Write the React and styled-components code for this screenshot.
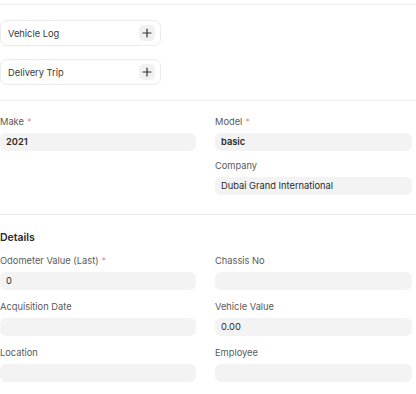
import React from "react";
import styled, { createGlobalStyle } from "styled-components";

const Global = createGlobalStyle`
  html, body { margin: 0; padding: 0; background: #fff; }
  body { font-family: Inter, "Noto Sans", sans-serif; color: #333; -webkit-font-smoothing: antialiased; }
  * { box-sizing: border-box; }
`;

const Page = styled.div`
  width: 416px;
  padding-top: 4px;
`;

const Section = styled.section`
  border-top: 1px solid #ededed;
  padding: ${(p) => p.$pad || "15px 4px 16px 0"};
`;

const Connections = styled.div`
  display: flex;
  flex-direction: column;
  gap: 13px;
  width: 161px;
`;

const ConnBox = styled.div`
  height: 26px;
  border: 1px solid #ebebeb;
  border-radius: 7px;
  display: flex;
  align-items: center;
  justify-content: space-between;
  padding: 0 5px 0 7px;
  font-size: 9.3px;
  color: #383838;
`;

const PlusBtn = styled.span`
  width: 16px;
  height: 16px;
  border-radius: 5px;
  background: #f1f1f1;
  display: flex;
  align-items: center;
  justify-content: center;
`;

const Grid = styled.div`
  display: grid;
  grid-template-columns: 196px 197px;
  column-gap: 19px;
  align-items: start;
`;

const Column = styled.div`
  display: flex;
  flex-direction: column;
  gap: ${(p) => p.$gap || "10px"};
`;

const Field = styled.div`
  display: flex;
  flex-direction: column;
`;

const Label = styled.div`
  font-size: 9.3px;
  line-height: 14px;
  color: #5a5a5a;
  margin-bottom: 4px;
  height: 14px;
`;

const Req = styled.span`
  color: #e79a9a;
  margin-left: 3px;
`;

const Input = styled.div`
  height: 18px;
  border-radius: 6px;
  background: #f3f3f3;
  font-size: 9.3px;
  line-height: 18px;
  padding: 0 6px;
  color: #2b2b2b;
  font-weight: ${(p) => (p.$bold ? 600 : 400)};
`;

const Heading = styled.div`
  font-size: 10.5px;
  font-weight: 600;
  color: #2a2a2a;
  line-height: 16px;
  margin-bottom: 8px;
`;

const Plus = () => (
  <svg width="10" height="10" viewBox="0 0 10 10">
    <path d="M5 1v8M1 5h8" stroke="#333" strokeWidth="1.2" strokeLinecap="round" />
  </svg>
);

const F = ({ label, req, value, bold }) => (
  <Field>
    <Label>
      {label}
      {req && <Req>*</Req>}
    </Label>
    <Input $bold={bold}>{value}</Input>
  </Field>
);

export default function App() {
  return (
    <Page>
      <Global />
      <Section $pad="15px 0 15px 0">
        <Connections>
          <ConnBox>
            Vehicle Log
            <PlusBtn><Plus /></PlusBtn>
          </ConnBox>
          <ConnBox>
            Delivery Trip
            <PlusBtn><Plus /></PlusBtn>
          </ConnBox>
        </Connections>
      </Section>
      <Section $pad="14px 4px 19px 0">
        <Grid>
          <Column>
            <F label="Make" req value="2021" bold />
          </Column>
          <Column $gap="8px">
            <F label="Model" req value="basic" bold />
            <F label="Company" value="Dubai Grand International" />
          </Column>
        </Grid>
      </Section>
      <Section $pad="15px 4px 12px 0">
        <Heading>Details</Heading>
        <Grid>
          <Column>
            <F label="Odometer Value (Last)" req value="0" />
            <F label="Acquisition Date" value="" />
            <F label="Location" value="" />
          </Column>
          <Column>
            <F label="Chassis No" value="" />
            <F label="Vehicle Value" value="0.00" />
            <F label="Employee" value="" />
          </Column>
        </Grid>
      </Section>
    </Page>
  );
}
